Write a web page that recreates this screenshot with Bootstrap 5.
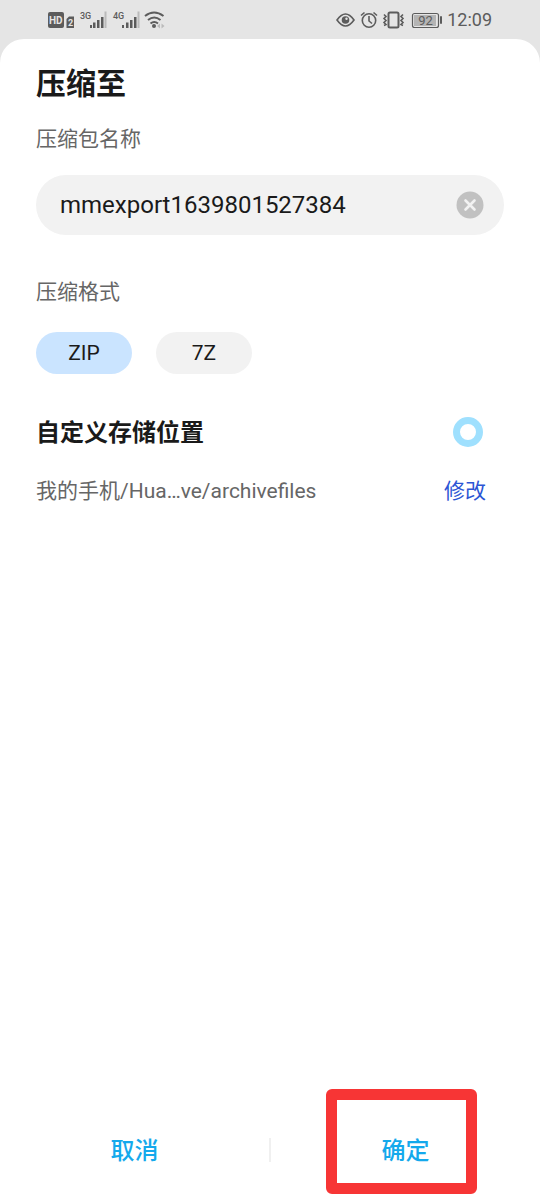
<!DOCTYPE html>
<html lang="zh-CN">
<head>
<meta charset="utf-8">
<meta name="viewport" content="width=device-width, initial-scale=1">
<title>压缩至</title>
<link href="https://cdn.jsdelivr.net/npm/bootstrap@5.3.0/dist/css/bootstrap.min.css" rel="stylesheet">
<style>
  body { background: #e5e5e5; color: #1a1a1a; font-family: Roboto, "Noto Sans CJK SC", sans-serif; }
  .status-bar { height: 39px; padding: 0 48px; color: #5c5c5c; font-size: 18px; line-height: 24px; }
  .status-bar svg { display: block; flex: none; }
  .status-bar svg text { font-family: Roboto, sans-serif; fill: currentColor; }
  .sheet { background: #fff; border-radius: 24px 24px 0 0; }
  .sheet-body { padding: 25px 36px 0; }
  .sheet-title { font-size: 30px; line-height: 40px; font-weight: 700; margin-bottom: 20px; }
  .field-label { font-size: 21px; line-height: 30px; font-weight: 400; color: #666; margin: 0; padding: 0; }
  .name-field { height: 60px; margin: 21px 0 42px; padding: 0 20px 0 24px; background: #f2f2f2; }
  .name-field .form-control { font-size: 24px; line-height: 34px; color: #1a1a1a; }
  .clear-btn { line-height: 0; }
  .formats { gap: 24px; margin: 25px 0 40px; }
  .format-pill { width: 96px; height: 42px; padding: 0; border: 0; font-size: 21px; line-height: 42px; color: #1a1a1a; background: #f2f2f2; }
  .btn-check:checked + .format-pill { background: #cae4ff; color: #1a1a1a; }
  .place-row { padding-right: 21px; margin-bottom: 26px; }
  .place-label { font-size: 24px; line-height: 34px; padding-top: 2px; font-weight: 700; }
  .ring-radio { width: 30px; height: 30px; margin: 0; border: 7px solid #9fe0fe; }
  .ring-radio:checked { background: #fff; border-color: #9fe0fe; }
  .path-row { padding-right: 18px; font-size: 21px; line-height: 30px; color: #666; }
  .path-row a { color: #2c55d4; }
  .sheet-footer { height: 100px; }
  .footer-btn { font-size: 24px; line-height: 36px; font-weight: 500; color: #14a9ec; padding: 2px 0 0; }
  .footer-rule { width: 2px; height: 24px; background: #f0f0f0; }
  .highlight-frame { left: 55px; top: -11px; width: 151px; height: 105px; border: 11px solid #f73535; border-radius: 6px; pointer-events: none; }
</style>
</head>
<body>
<div class="d-flex flex-column min-vh-100">
  <header class="status-bar d-flex align-items-center justify-content-between">
    <svg width="118" height="24" viewBox="0 0 118 24" fill="currentColor" aria-hidden="true">
      <rect x="0" y="4" width="16" height="16" rx="2"/>
      <text x="1" y="16" font-size="10" font-weight="700" style="fill:#e5e5e5">HD</text>
      <path d="M18.500 11l2.500-2.500h5v11.500h-7.500z"/>
      <text x="20" y="18" font-size="9" font-weight="700" style="fill:#e5e5e5">2</text>
      <text x="32" y="11" font-size="9" font-weight="500">3G</text>
      <path d="M42 17h2v3h-2zM45 14.500h2.500v5.500h-2.500zM49 12h2.500v8h-2.500zM53 9h2.500v11h-2.500z"/>
      <path d="M56.500 3.500h2v16.500h-2z" fill="#bbb"/>
      <text x="65" y="11" font-size="9" font-weight="500">4G</text>
      <path d="M74 17h2v3h-2zM78 14.500h2.500v5.500h-2.500zM82 12h2.500v8h-2.500zM86 9h2.500v11h-2.500z"/>
      <path d="M89.500 3.500h2v16.500h-2z" fill="#bbb"/>
      <g fill="none" stroke="currentColor" stroke-width="2"><path d="M97 8q9-7 18.500 0M100 12q6.200-5 12.500 0M102.500 15.500q3.700-3 7.500 0"/></g>
      <circle cx="106" cy="18" r="2"/>
      <path d="M112 15.500v5l-3-2.500zM113.500 15.500v5l3-2.500z" fill="#bbb"/>
    </svg>
    <div class="d-flex align-items-center">
      <svg width="107" height="24" viewBox="0 0 107 24" fill="none" stroke="currentColor" stroke-width="1.600" aria-hidden="true">
        <path d="M1 12q8.500-12 17 0q-8.500 12-17 0z"/>
        <circle cx="9.500" cy="12" r="3.800" fill="currentColor" stroke="none"/><circle cx="10.500" cy="10.700" r="1.200" fill="#e5e5e5" stroke="none"/>
        <circle cx="33" cy="12.500" r="6.700"/><path d="M33 8v5l3 2.500M25 7.500l3.500-3M41 7.500l-3.500-3"/>
        <rect x="52.500" y="4.500" width="10" height="15" rx="1.500" stroke-width="2"/>
        <path d="M48 6.500l2 2-2 2 2 2-2 2 2 2-2 1M67 6.500l-2 2 2 2-2 2 2 2-2 2 2 1"/>
        <rect x="76.500" y="5.500" width="26" height="14" rx="2" stroke-width="1.200"/>
        <rect x="78" y="7" width="22" height="11" fill="#b4b4b4" stroke="none"/>
        <rect x="104" y="8" width="2" height="8" rx="1" fill="currentColor" stroke="none"/>
        <text x="89.500" y="17" font-size="13" text-anchor="middle" stroke="none">92</text>
      </svg>
      <time class="ms-1">12:09</time>
    </div>
  </header>

  <main class="sheet flex-grow-1 d-flex flex-column">
    <div class="sheet-body">
      <h1 class="sheet-title">压缩至</h1>
      <label class="field-label d-block" for="archiveName">压缩包名称</label>
      <div class="name-field rounded-pill d-flex align-items-center">
        <input type="text" class="form-control border-0 bg-transparent shadow-none p-0" id="archiveName" value="mmexport1639801527384">
        <button type="button" class="clear-btn btn border-0 p-0" aria-label="清除">
          <svg width="28" height="28" viewBox="0 0 28 28"><circle cx="14" cy="14" r="13.500" fill="#c1c1c1"/><path d="M9.500 9.500l9 9M18.500 9.500l-9 9" stroke="#f2f2f2" stroke-width="2.600" stroke-linecap="round"/></svg>
        </button>
      </div>

      <h2 class="field-label" id="formatLabel">压缩格式</h2>
      <div class="formats d-flex" role="radiogroup" aria-labelledby="formatLabel">
        <div>
          <input type="radio" class="btn-check" name="format" id="formatZip" checked>
          <label class="format-pill btn rounded-pill" for="formatZip">ZIP</label>
        </div>
        <div>
          <input type="radio" class="btn-check" name="format" id="format7z">
          <label class="format-pill btn rounded-pill" for="format7z">7Z</label>
        </div>
      </div>

      <div class="place-row d-flex align-items-center justify-content-between">
        <label class="place-label" for="customPlace">自定义存储位置</label>
        <input type="radio" class="ring-radio form-check-input shadow-none" id="customPlace">
      </div>
      <div class="path-row d-flex justify-content-between">
        <span>我的手机/Hua…ve/archivefiles</span>
        <a href="#" class="text-decoration-none">修改</a>
      </div>
    </div>

    <footer class="sheet-footer mt-auto d-flex align-items-center">
      <div class="w-50 text-center">
        <button type="button" class="footer-btn btn border-0">取消</button>
      </div>
      <div class="footer-rule flex-shrink-0"></div>
      <div class="w-50 h-100 position-relative d-flex align-items-center justify-content-center">
        <button type="button" class="footer-btn btn border-0">确定</button>
        <div class="highlight-frame position-absolute"></div>
      </div>
    </footer>
  </main>
</div>
<script src="https://cdn.jsdelivr.net/npm/bootstrap@5.3.0/dist/js/bootstrap.bundle.min.js"></script>
</body>
</html>
